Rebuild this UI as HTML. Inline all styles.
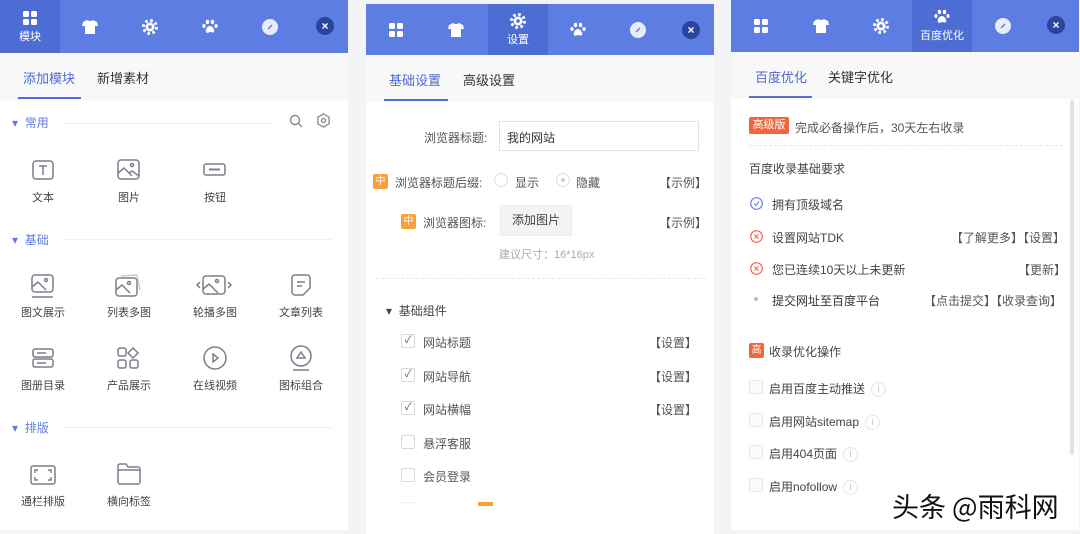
<!DOCTYPE html>
<html><head><meta charset="utf-8"><style>
*{box-sizing:border-box;margin:0;padding:0}
body{width:1080px;height:534px;background:#f3f4f6;font-family:"Liberation Sans","Noto Sans CJK SC",sans-serif;font-size:12px;color:#333;position:relative;overflow:hidden}
.p{position:absolute;background:#fff;width:348px;overflow:hidden}
.hd{position:absolute;left:0;top:0;width:100%;height:53px;background:#5d7de2}
.t{position:absolute;top:0;width:60px;height:53px;display:flex;flex-direction:column;align-items:center;justify-content:center;color:#fff;font-size:11px}
.t.a{background:#4e6dd4}
.x{position:absolute;width:18px;height:18px;border-radius:50%;background:#2b44a0;color:#fff;font-size:12px;font-weight:bold;text-align:center;line-height:18px}
.tb{position:absolute;left:0;top:53px;width:100%;height:47px;background:#f8f8f9}
.tb span{position:absolute;top:15px;font-size:13px;color:#333}
.tb span.a{color:#4d6ad0}
.ul{position:absolute;top:44px;height:2px;background:#5470d6}
.abs{position:absolute;white-space:nowrap}
.sec{color:#5d7de2;font-size:12px}
.ln{position:absolute;height:1px;background:#eef0f3}
.lab{font-size:11px;color:#444;text-align:center;width:70px}
.ic{position:absolute}
.cb{position:absolute;width:14px;height:14px;border:1px solid #d8d8d8;border-radius:2px;background:#fff;font-size:10px;color:#555;text-align:center;line-height:12px}
.g{color:#555}
.badge{position:absolute;background:#f7a13a;color:#fff;font-size:10px;width:15px;height:15px;text-align:center;line-height:15px;border-radius:2px}
.info{display:inline-block;width:15px;height:15px;border:1px solid #e5e5e5;border-radius:50%;font-size:9px;color:#bbb;text-align:center;line-height:13px;margin-left:6px;vertical-align:middle}
</style></head><body>

<!-- PANEL 1 -->
<div class="p" style="left:0;top:0;height:530px">
 <div class="hd">
  <div class="t a" style="left:0"><svg width="16" height="16" viewBox="0 0 16 16" fill="#fff"><rect x="1" y="1" width="6" height="6" rx="1.5"/><rect x="9" y="1" width="6" height="6" rx="1.5"/><rect x="1" y="9" width="6" height="6" rx="1.5"/><rect x="9" y="9" width="6" height="6" rx="1.5"/></svg><div style="margin-top:2px">模块</div></div>
  <div class="t" style="left:60px"><svg width="16" height="14" viewBox="0 0 16 14" fill="#fff"><path d="M5 0L1 2 0 6 3 6 3 14 13 14 13 6 16 6 15 2 11 0Q8 2 5 0Z"/></svg></div>
  <div class="t" style="left:120px"><svg width="16" height="16" viewBox="0 0 16 16"><circle cx="8" cy="8" r="6.5" fill="none" stroke="#fff" stroke-width="3" stroke-dasharray="2.6 2.5"/><circle cx="8" cy="8" r="4.5" fill="#fff"/><circle cx="8" cy="8" r="1.8" fill="#5d7de2"/></svg></div>
  <div class="t" style="left:180px"><svg width="16" height="16" viewBox="0 0 16 16" fill="#fff"><ellipse cx="5.5" cy="3" rx="1.7" ry="2.2"/><ellipse cx="10.5" cy="3" rx="1.7" ry="2.2"/><ellipse cx="2" cy="7" rx="1.6" ry="2"/><ellipse cx="14" cy="7" rx="1.6" ry="2"/><path d="M8 7C5 7 3 11 4 13S7 13 8 13 11 14 12 13 11 7 8 7Z"/></svg></div>
  <div class="t" style="left:240px"><svg width="16" height="16" viewBox="0 0 16 16"><circle cx="8" cy="8" r="8" fill="#fff" opacity=".85"/><path d="M6 10L10 6" stroke="#5d7de2" stroke-width="1.5"/></svg></div>
  <div class="x" style="left:316px;top:17px">×</div>
 </div>
 <div class="tb"><span class="a" style="left:23px">添加模块</span><span style="left:97px">新增素材</span><div class="ul" style="left:18px;width:63px"></div></div>

 <div class="abs sec" style="left:12px;top:114px">▾ &nbsp;常用</div><div class="ln" style="left:62px;top:123px;width:210px"></div>
 <svg class="ic" style="left:289px;top:114px" width="14" height="14" viewBox="0 0 14 14" fill="none" stroke="#888" stroke-width="1.4"><circle cx="6" cy="6" r="4.5"/><path d="M9.5 9.5L13 13"/></svg>
 <svg class="ic" style="left:316px;top:113px" width="15" height="15" viewBox="0 0 16 16" fill="none" stroke="#888" stroke-width="1.4"><path d="M8 1L14 4.5 14 11.5 8 15 2 11.5 2 4.5Z"/><circle cx="8" cy="8" r="2.2"/></svg>
 <div class="ln" style="left:62px;top:239px;width:270px"></div><div class="abs sec" style="left:12px;top:231px">▾ &nbsp;基础</div>
 <div class="ln" style="left:62px;top:427px;width:270px"></div><div class="abs sec" style="left:12px;top:419px">▾ &nbsp;排版</div>

 <svg class="ic" style="left:32px;top:160px" width="22" height="20" viewBox="0 0 22 20" fill="none" stroke="#7a7f8a" stroke-width="1.5"><rect x="1" y="1" width="20" height="18" rx="3"/><path d="M7 6h8M11 6v9"/></svg>
 <div class="abs lab" style="left:8px;top:189px">文本</div>
 <svg class="ic" style="left:117px;top:159px" width="23" height="21" viewBox="0 0 23 21" fill="none" stroke="#7a7f8a" stroke-width="1.5"><rect x="1" y="1" width="21" height="19" rx="3"/><circle cx="15" cy="6" r="1.5"/><path d="M1 14l6-5 8 8M12 14l3-2 7 5"/></svg>
 <div class="abs lab" style="left:94px;top:189px">图片</div>
 <svg class="ic" style="left:203px;top:163px" width="23" height="13" viewBox="0 0 23 13" fill="none" stroke="#7a7f8a" stroke-width="1.5"><rect x="1" y="1" width="21" height="11" rx="2"/><path d="M6 6.5h11" stroke-width="2"/></svg>
 <div class="abs lab" style="left:180px;top:189px">按钮</div>
 <svg class="ic" style="left:31px;top:274px" width="23" height="24" viewBox="0 0 23 24" fill="none" stroke="#7a7f8a" stroke-width="1.5"><rect x="1" y="1" width="21" height="17" rx="3"/><circle cx="15" cy="6" r="1.5"/><path d="M1 13l6-5 8 8M1 23h21"/></svg>
 <div class="abs lab" style="left:8px;top:304px">图文展示</div>
 <svg class="ic" style="left:115px;top:273px" width="26" height="24" viewBox="0 0 26 24" fill="none" stroke="#7a7f8a" stroke-width="1.5"><rect x="1" y="5" width="21" height="18" rx="3"/><path d="M6 3l16-1 3 15" stroke="#ccc"/><circle cx="14" cy="10" r="1.5"/><path d="M1 17l6-5 8 8"/></svg>
 <div class="abs lab" style="left:94px;top:304px">列表多图</div>
 <svg class="ic" style="left:195px;top:274px" width="38" height="22" viewBox="0 0 38 22" fill="none" stroke="#7a7f8a" stroke-width="1.5"><path d="M5 8l-3 3 3 3M33 8l3 3-3 3"/><rect x="8" y="2" width="22" height="18" rx="3"/><circle cx="22" cy="7" r="1.5"/><path d="M8 15l6-5 9 9"/></svg>
 <div class="abs lab" style="left:180px;top:304px">轮播多图</div>
 <svg class="ic" style="left:291px;top:274px" width="20" height="22" viewBox="0 0 20 22" fill="none" stroke="#7a7f8a" stroke-width="1.5"><path d="M4 1h12a3 3 0 013 3v10l-7 7H4a3 3 0 01-3-3V4a3 3 0 013-3zM6 8h8M6 12h5"/></svg>
 <div class="abs lab" style="left:266px;top:304px">文章列表</div>
 <svg class="ic" style="left:32px;top:348px" width="22" height="20" viewBox="0 0 22 20" fill="none" stroke="#7a7f8a" stroke-width="1.5"><rect x="1" y="1" width="20" height="8" rx="2"/><rect x="1" y="11" width="20" height="8" rx="2"/><path d="M5 5h9M5 15h9"/></svg>
 <div class="abs lab" style="left:8px;top:377px">图册目录</div>
 <svg class="ic" style="left:117px;top:347px" width="22" height="22" viewBox="0 0 22 22" fill="none" stroke="#7a7f8a" stroke-width="1.5"><rect x="1" y="1" width="8" height="8" rx="2"/><path d="M16 1l5 5-5 5-5-5z"/><rect x="1" y="13" width="8" height="8" rx="2"/><rect x="13" y="13" width="8" height="8" rx="2"/></svg>
 <div class="abs lab" style="left:94px;top:377px">产品展示</div>
 <svg class="ic" style="left:203px;top:346px" width="24" height="24" viewBox="0 0 24 24" fill="none" stroke="#7a7f8a" stroke-width="1.5"><circle cx="12" cy="12" r="11"/><path d="M10 8l5 4-5 4z"/></svg>
 <div class="abs lab" style="left:180px;top:377px">在线视频</div>
 <svg class="ic" style="left:289px;top:345px" width="24" height="26" viewBox="0 0 24 26" fill="none" stroke="#7a7f8a" stroke-width="1.5"><circle cx="12" cy="11" r="10"/><path d="M12 7l4 6H8z M4 25h16"/></svg>
 <div class="abs lab" style="left:266px;top:377px">图标组合</div>
 <svg class="ic" style="left:30px;top:465px" width="26" height="20" viewBox="0 0 26 20" fill="none" stroke="#7a7f8a" stroke-width="1.5"><rect x="1" y="1" width="24" height="18" rx="2"/><path d="M5 8V5h3M21 8V5h-3M5 12v3h3M21 12v3h-3"/></svg>
 <div class="abs lab" style="left:8px;top:493px">通栏排版</div>
 <svg class="ic" style="left:117px;top:463px" width="24" height="22" viewBox="0 0 24 22" fill="none" stroke="#7a7f8a" stroke-width="1.5"><path d="M1 3a2 2 0 012-2h6l2 3h10a2 2 0 012 2v13a2 2 0 01-2 2H3a2 2 0 01-2-2zM1 7h22"/></svg>
 <div class="abs lab" style="left:94px;top:493px">横向标签</div>
</div>

<!-- PANEL 2 -->
<div class="p" style="left:366px;top:4px;height:530px">
 <div class="hd" style="height:51px">
  <div class="t" style="left:0;height:51px"><svg width="16" height="16" viewBox="0 0 16 16" fill="#fff"><rect x="1" y="1" width="6" height="6" rx="1.5"/><rect x="9" y="1" width="6" height="6" rx="1.5"/><rect x="1" y="9" width="6" height="6" rx="1.5"/><rect x="9" y="9" width="6" height="6" rx="1.5"/></svg></div>
  <div class="t" style="left:60px;height:51px"><svg width="16" height="14" viewBox="0 0 16 14" fill="#fff"><path d="M5 0L1 2 0 6 3 6 3 14 13 14 13 6 16 6 15 2 11 0Q8 2 5 0Z"/></svg></div>
  <div class="t a" style="left:122px;height:51px"><svg width="16" height="16" viewBox="0 0 16 16"><circle cx="8" cy="8" r="6.5" fill="none" stroke="#fff" stroke-width="3" stroke-dasharray="2.6 2.5"/><circle cx="8" cy="8" r="4.5" fill="#fff"/><circle cx="8" cy="8" r="1.8" fill="#4e6dd4"/></svg><div style="margin-top:2px">设置</div></div>
  <div class="t" style="left:182px;height:51px"><svg width="16" height="16" viewBox="0 0 16 16" fill="#fff"><ellipse cx="5.5" cy="3" rx="1.7" ry="2.2"/><ellipse cx="10.5" cy="3" rx="1.7" ry="2.2"/><ellipse cx="2" cy="7" rx="1.6" ry="2"/><ellipse cx="14" cy="7" rx="1.6" ry="2"/><path d="M8 7C5 7 3 11 4 13S7 13 8 13 11 14 12 13 11 7 8 7Z"/></svg></div>
  <div class="t" style="left:242px;height:51px"><svg width="16" height="16" viewBox="0 0 16 16"><circle cx="8" cy="8" r="8" fill="#fff" opacity=".85"/><path d="M6 10L10 6" stroke="#5d7de2" stroke-width="1.5"/></svg></div>
  <div class="x" style="left:316px;top:17px">×</div>
 </div>
 <div class="tb" style="top:51px"><span class="a" style="left:23px">基础设置</span><span style="left:97px">高级设置</span><div class="ul" style="left:18px;width:64px"></div></div>
 <div class="abs g" style="left:58px;top:125px;font-size:12px">浏览器标题:</div>
 <div class="abs" style="left:133px;top:117px;width:200px;height:30px;border:1px solid #e3e3e3;padding:7px 7px;color:#333">我的网站</div>
 <div class="badge" style="left:7px;top:170px">中</div>
 <div class="abs g" style="left:29px;top:170px">浏览器标题后缀:</div>
 <div class="abs" style="left:128px;top:169px;width:14px;height:14px;border:1px solid #ddd;border-radius:50%"></div>
 <div class="abs g" style="left:149px;top:170px">显示</div>
 <div class="abs" style="left:190px;top:169px;width:14px;height:14px;border:1px solid #ddd;border-radius:50%"><div style="margin:4px;width:4px;height:4px;border-radius:50%;background:#ccc"></div></div>
 <div class="abs g" style="left:210px;top:170px">隐藏</div>
 <div class="abs g" style="left:293px;top:170px">【示例】</div>
 <div class="badge" style="left:35px;top:210px">中</div>
 <div class="abs g" style="left:57px;top:210px">浏览器图标:</div>
 <div class="abs" style="left:134px;top:201px;width:72px;height:31px;background:#f3f3f3;border:1px solid #eee;text-align:center;line-height:29px;color:#444">添加图片</div>
 <div class="abs g" style="left:293px;top:210px">【示例】</div>
 <div class="abs" style="left:133px;top:242px;color:#aaa;font-size:11px">建议尺寸：16*16px</div>
 <div class="abs" style="left:10px;top:274px;width:330px;border-top:1px dashed #e6e6e6"></div>
 <div class="abs g" style="left:20px;top:298px;color:#444">▾ &nbsp;基础组件</div>
 <div class="cb" style="left:35px;top:330px">✓</div><div class="abs g" style="left:57px;top:330px">网站标题</div><div class="abs g" style="left:283px;top:330px">【设置】</div>
 <div class="cb" style="left:35px;top:364px">✓</div><div class="abs g" style="left:57px;top:364px">网站导航</div><div class="abs g" style="left:283px;top:364px">【设置】</div>
 <div class="cb" style="left:35px;top:397px">✓</div><div class="abs g" style="left:57px;top:397px">网站横幅</div><div class="abs g" style="left:283px;top:397px">【设置】</div>
 <div class="cb" style="left:35px;top:431px"></div><div class="abs g" style="left:57px;top:431px">悬浮客服</div>
 <div class="cb" style="left:35px;top:464px"></div><div class="abs g" style="left:57px;top:464px">会员登录</div>
 <div class="cb" style="left:35px;top:498px;border-color:#eee"></div><div class="abs" style="left:112px;top:498px;width:15px;height:4px;background:#f7a13a"></div>
 <div style="position:absolute;left:0;top:502px;width:348px;height:30px;background:#fff"></div>
</div>

<!-- PANEL 3 -->
<div class="p" style="left:731px;top:0;height:530px">
 <div class="hd" style="height:52px">
  <div class="t" style="left:0;height:52px"><svg width="16" height="16" viewBox="0 0 16 16" fill="#fff"><rect x="1" y="1" width="6" height="6" rx="1.5"/><rect x="9" y="1" width="6" height="6" rx="1.5"/><rect x="1" y="9" width="6" height="6" rx="1.5"/><rect x="9" y="9" width="6" height="6" rx="1.5"/></svg></div>
  <div class="t" style="left:60px;height:52px"><svg width="16" height="14" viewBox="0 0 16 14" fill="#fff"><path d="M5 0L1 2 0 6 3 6 3 14 13 14 13 6 16 6 15 2 11 0Q8 2 5 0Z"/></svg></div>
  <div class="t" style="left:120px;height:52px"><svg width="16" height="16" viewBox="0 0 16 16"><circle cx="8" cy="8" r="6.5" fill="none" stroke="#fff" stroke-width="3" stroke-dasharray="2.6 2.5"/><circle cx="8" cy="8" r="4.5" fill="#fff"/><circle cx="8" cy="8" r="1.8" fill="#5d7de2"/></svg></div>
  <div class="t a" style="left:181px;height:52px"><svg width="16" height="16" viewBox="0 0 16 16" fill="#fff"><ellipse cx="5.5" cy="3" rx="1.7" ry="2.2"/><ellipse cx="10.5" cy="3" rx="1.7" ry="2.2"/><ellipse cx="2" cy="7" rx="1.6" ry="2"/><ellipse cx="14" cy="7" rx="1.6" ry="2"/><path d="M8 7C5 7 3 11 4 13S7 13 8 13 11 14 12 13 11 7 8 7Z"/></svg><div style="margin-top:2px">百度优化</div></div>
  <div class="t" style="left:242px;height:52px"><svg width="16" height="16" viewBox="0 0 16 16"><circle cx="8" cy="8" r="8" fill="#fff" opacity=".85"/><path d="M6 10L10 6" stroke="#5d7de2" stroke-width="1.5"/></svg></div>
  <div class="x" style="left:316px;top:16px">×</div>
 </div>
 <div class="tb" style="top:52px"><span class="a" style="left:24px">百度优化</span><span style="left:97px">关键字优化</span><div class="ul" style="left:18px;width:63px"></div></div>
 <div class="abs" style="left:339px;top:100px;width:4px;height:355px;background:#e2e2e2;border-radius:2px"></div>
 <div class="abs" style="left:18px;top:117px;width:40px;height:17px;background:#f0663f;color:#fff;font-size:11px;text-align:center;line-height:17px;border-radius:2px">高级版</div>
 <div class="abs g" style="left:64px;top:119px">完成必备操作后，30天左右收录</div>
 <div class="abs" style="left:18px;top:145px;width:314px;border-top:1px dashed #e6e6e6"></div>
 <div class="abs g" style="left:18px;top:160px;color:#444">百度收录基础要求</div>
 <svg class="ic" style="left:19px;top:197px" width="13" height="13" viewBox="0 0 13 13" fill="none" stroke="#6b83dc" stroke-width="1.2"><circle cx="6.5" cy="6.5" r="5.8"/><path d="M4 6.5l2 2 3-4"/></svg>
 <div class="abs" style="left:41px;top:196px;color:#444">拥有顶级域名</div>
 <svg class="ic" style="left:19px;top:230px" width="13" height="13" viewBox="0 0 13 13" fill="none" stroke="#ee6a55" stroke-width="1.2"><circle cx="6.5" cy="6.5" r="5.8"/><path d="M4.5 4.5l4 4M8.5 4.5l-4 4"/></svg>
 <div class="abs" style="left:41px;top:229px;color:#444">设置网站TDK</div>
 <div class="abs g" style="left:220px;top:229px">【了解更多】【设置】</div>
 <svg class="ic" style="left:19px;top:262px" width="13" height="13" viewBox="0 0 13 13" fill="none" stroke="#ee6a55" stroke-width="1.2"><circle cx="6.5" cy="6.5" r="5.8"/><path d="M4.5 4.5l4 4M8.5 4.5l-4 4"/></svg>
 <div class="abs" style="left:41px;top:261px;color:#444">您已连续10天以上未更新</div>
 <div class="abs g" style="left:287px;top:261px">【更新】</div>
 <div class="abs" style="left:23px;top:297px;width:4px;height:4px;border-radius:50%;background:#bbb"></div>
 <div class="abs" style="left:41px;top:292px;color:#333">提交网址至百度平台</div>
 <div class="abs g" style="left:193px;top:292px">【点击提交】【收录查询】</div>
 <div class="abs" style="left:18px;top:343px;width:15px;height:15px;background:#f0663f;color:#fff;font-size:10px;text-align:center;line-height:15px;border-radius:2px">高</div>
 <div class="abs" style="left:38px;top:343px;color:#444">收录优化操作</div>
 <div class="cb" style="left:18px;top:380px;border-color:#e6e6e6;background:#fafafa"></div><div class="abs" style="left:38px;top:380px;color:#444">启用百度主动推送<span class="info">i</span></div>
 <div class="cb" style="left:18px;top:413px;border-color:#e6e6e6;background:#fafafa"></div><div class="abs" style="left:38px;top:413px;color:#444">启用网站sitemap<span class="info">i</span></div>
 <div class="cb" style="left:18px;top:445px;border-color:#e6e6e6;background:#fafafa"></div><div class="abs" style="left:38px;top:445px;color:#444">启用404页面<span class="info">i</span></div>
 <div class="cb" style="left:18px;top:478px;border-color:#e6e6e6;background:#fafafa"></div><div class="abs" style="left:38px;top:478px;color:#444">启用nofollow<span class="info">i</span></div>
</div>

<div class="abs" style="left:892px;top:486px;font-size:27px;color:#111;font-family:'Noto Sans CJK SC',sans-serif;text-shadow:-1px -1px 0 #fff,1px 1px 0 #fff,1px -1px 0 #fff,-1px 1px 0 #fff">头条 @雨科网</div>
</body></html>
